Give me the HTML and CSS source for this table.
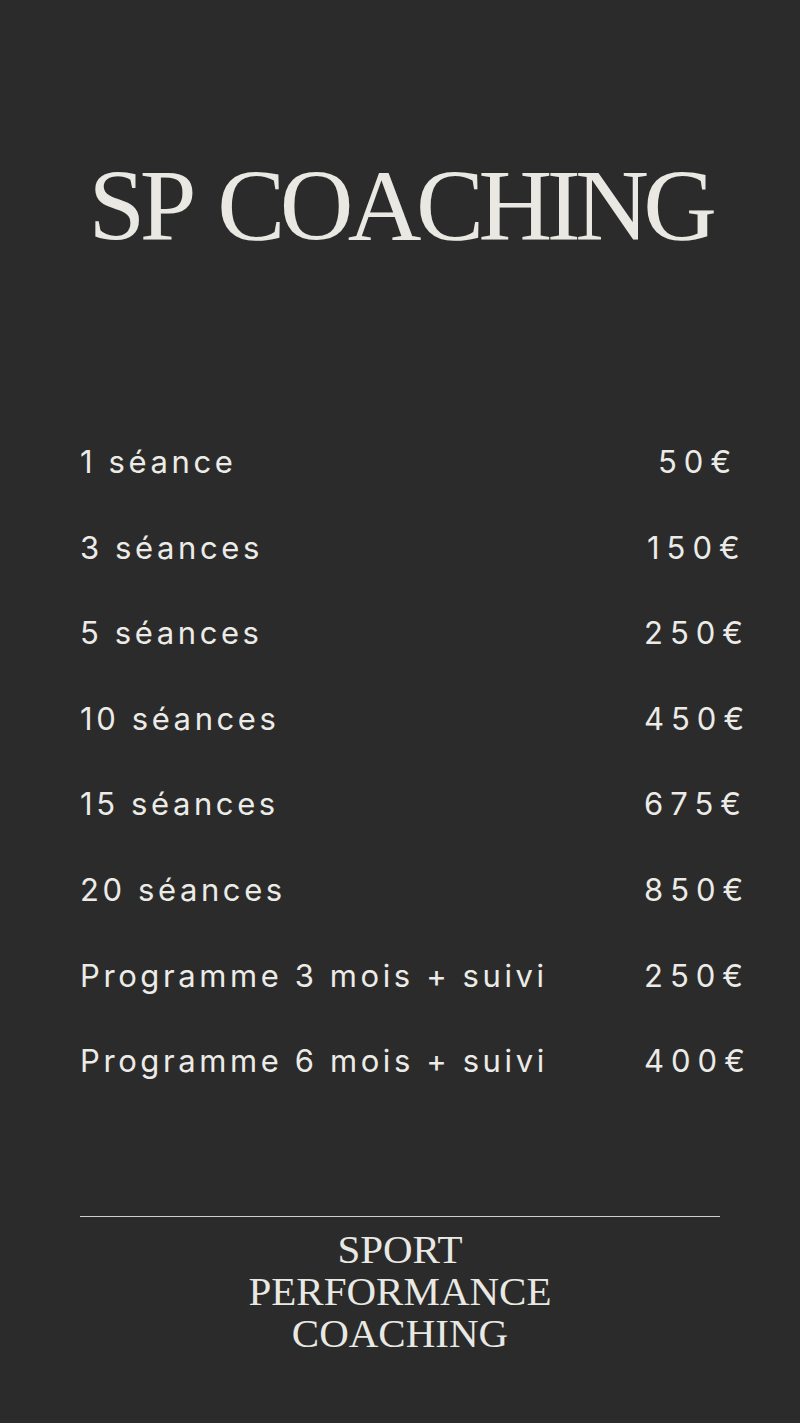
FILE: index.html
```html
<!DOCTYPE html>
<html lang="fr">
<head>
<meta charset="utf-8">
<title>SP Coaching</title>
<link rel="stylesheet" href="styles.css">
</head>
<body>
<main class="page">
  <h1 class="title">SP COACHING</h1>
  <ul class="prices">
    <li class="row"><span class="label">1 séance</span><span class="price price--a">50€</span></li>
    <li class="row"><span class="label">3 séances</span><span class="price price--b">150€</span></li>
    <li class="row"><span class="label">5 séances</span><span class="price">250€</span></li>
    <li class="row"><span class="label">10 séances</span><span class="price">450€</span></li>
    <li class="row"><span class="label">15 séances</span><span class="price">675€</span></li>
    <li class="row"><span class="label">20 séances</span><span class="price">850€</span></li>
    <li class="row"><span class="label">Programme 3 mois + suivi</span><span class="price">250€</span></li>
    <li class="row"><span class="label">Programme 6 mois + suivi</span><span class="price">400€</span></li>
  </ul>
  <footer class="footer">
    <hr class="rule">
    <p class="brand">SPORT<br>PERFORMANCE<br>COACHING</p>
  </footer>
</main>
</body>
</html>
```
FILE: styles.css
```css
html, body {
  margin: 0;
  padding: 0;
  background: #2b2b2b;
}
.page {
  width: 800px;
  height: 1423px;
  color: #ecebe7;
  display: flex;
  flex-direction: column;
}
.title {
  margin: 155px 0 0;
  font-family: "Liberation Serif", "Times New Roman", serif;
  font-weight: 400;
  font-size: 102px;
  line-height: 102px;
  letter-spacing: -5.5px;
  word-spacing: 10px;
  text-align: center;
  color: #e9e8e3;
}
.prices {
  list-style: none;
  margin: 162px 0 0;
  padding: 0 0 0 80px;
  display: flex;
  flex-direction: column;
}
.row {
  height: 85.6px;
  line-height: 85.6px;
  display: flex;
  font-family: "Inter", "Liberation Sans", sans-serif;
  font-size: 31px;
}
.label {
  width: 564px;
  letter-spacing: 3.6px;
}
.price {
  letter-spacing: 7px;
}
.price--a { padding-left: 14px; }
.price--b { padding-left: 3px; }
.footer {
  margin-top: 112px;
  display: flex;
  flex-direction: column;
  align-items: center;
}
.rule {
  width: 640px;
  margin: 0;
  border: 0;
  height: 1px;
  background: #d0cfcc;
}
.brand {
  margin: 11px 0 0;
  font-family: "Liberation Serif", "Times New Roman", serif;
  font-size: 41px;
  line-height: 42px;
  text-align: center;
  color: #e9e8e3;
}
```
